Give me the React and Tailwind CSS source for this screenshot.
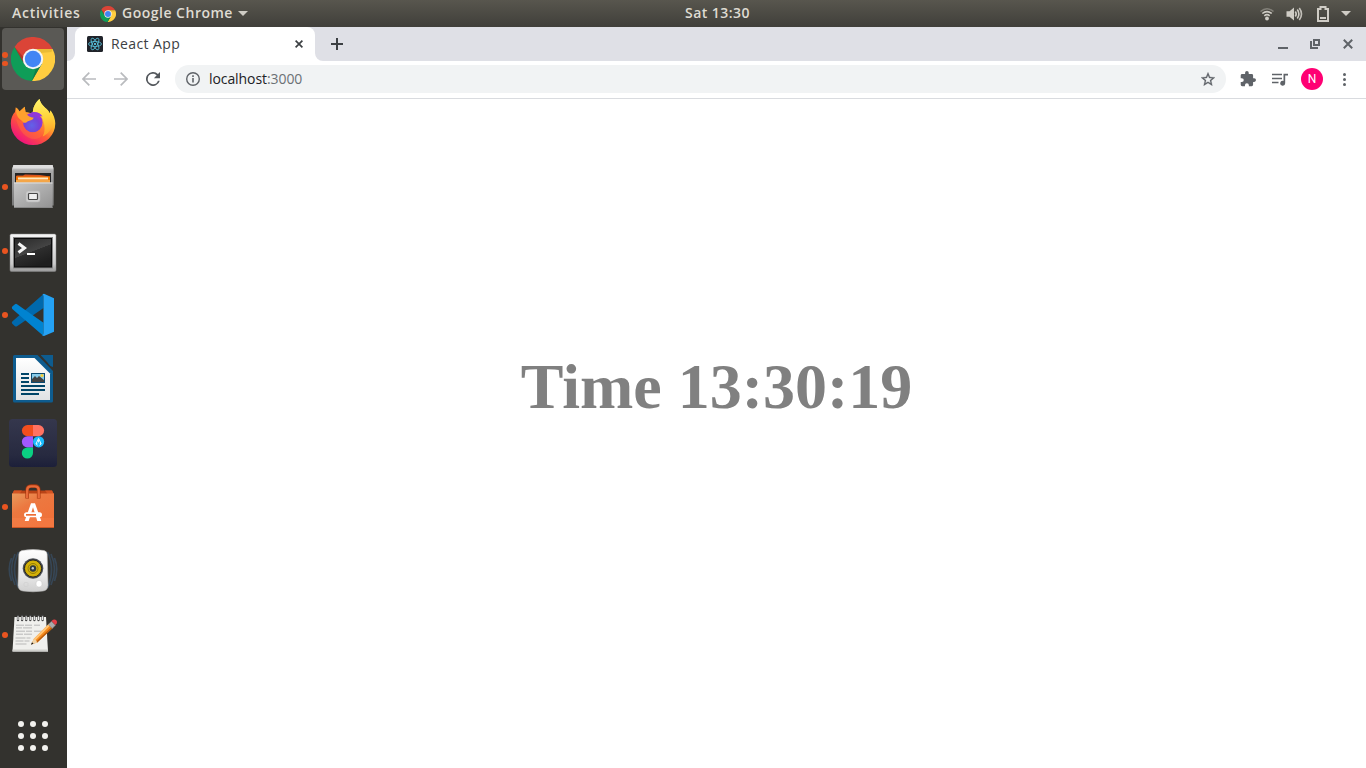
import React from "react";

function ChromeLogo({ className }) {
  return (
    <svg className={className} viewBox="-22 -22 44 44">
      <path d="M-18.46-12A22 22 0 0 1 19.6-10H0L-8.66 5Z" fill="#db4437" />
      <path d="M19.6-10A22 22 0 0 1-1.14 22L8.66 5 0-10Z" fill="#ffcd40" />
      <path d="M-1.14 22A22 22 0 0 1-18.46-12L-8.66 5H8.66Z" fill="#0f9d58" />
      <path d="M0-10H19.6L18.5-7 8-6Z" fill="#c49a20" opacity=".35" />
      <path d="M-18.46-12-8.66 5-9.5-2Z" fill="#7a1d14" opacity=".4" />
      <path d="M-1.14 22 8.66 5 3 9Z" fill="#064d2b" opacity=".35" />
      <circle r="10.2" fill="#f4f4f4" />
      <circle r="8.2" fill="#4285f4" />
    </svg>
  );
}

function Firefox() {
  return (
    <svg className="h-16 w-[67px]" viewBox="0 0 67 64">
      <defs>
        <linearGradient id="ffBody" x1=".85" y1=".1" x2=".25" y2=".95">
          <stop offset="0" stopColor="#fff44f" />
          <stop offset=".35" stopColor="#ffb52a" />
          <stop offset=".62" stopColor="#ff5a36" />
          <stop offset="1" stopColor="#f0127e" />
        </linearGradient>
        <linearGradient id="ffFlame" x1=".5" y1="0" x2=".6" y2="1">
          <stop offset="0" stopColor="#fff36b" />
          <stop offset=".5" stopColor="#ffd43a" />
          <stop offset="1" stopColor="#ff9a2a" />
        </linearGradient>
        <radialGradient id="ffGlobe" cx=".45" cy=".65" r=".65">
          <stop offset="0" stopColor="#6262e8" />
          <stop offset=".6" stopColor="#7542d8" />
          <stop offset="1" stopColor="#a52fd8" />
        </radialGradient>
      </defs>
      <path d="M39.5 8c1 5 5 8 8 11 1 1 1.500 2 2 3.500l1-3c3 4 4.800 8.600 4.800 13A22.200 21.500 0 0 1 10.800 32.500c0-5.200 1.800-9 4.200-11.500l.8-4.500c1.700 1 3 2.500 3.700 4l5.200-4.700.8 5.200c3 .2 5 .8 7.500 2.500C32 17 36 11 39.500 8Z" fill="url(#ffBody)" />
      <path d="M39.500 8c1 5 5 8 8 11 1 1 1.500 2 2 3.500l1-3c6 9 2 22-8 26 4-6 2-16-2-21-3-2-5-2-7.500-1C32 17 36 11 39.500 8Z" fill="url(#ffFlame)" />
      <circle cx="32.800" cy="31.500" r="9.800" fill="url(#ffGlobe)" />
      <path d="M31 21.500c5-1.500 10 .5 11.500 4-4-1.500-7 0-9-1Z" fill="#9138d8" />
      <path d="M15.800 16.500c1.700 1 3 2.500 3.700 4l5.200-4.700.8 5.200c1.500 4 5 5.500 8 5.500 0 3-4.500 2.500-6.500 4.500-2 1.500-4 1-5-1-2-2-6-3-6.200-13.500Z" fill="#ffa02d" />
      <path d="M16 28c2 1 4 2 6.500 2 .5 7 5 12 12 11 5-1 8-4 8.500-9 3 7 0 16-8 16-9.500 0-16-8-19-20Z" fill="#ff7139" opacity=".45" />
    </svg>
  );
}

function Files() {
  return (
    <svg className="h-16 w-[67px]" viewBox="0 0 67 64">
      <defs>
        <linearGradient id="fileBack" x2="0" y2="1"><stop stopColor="#ddd" /><stop offset=".15" stopColor="#aaa" /><stop offset="1" stopColor="#777" /></linearGradient>
        <linearGradient id="fileFront" x2="1" y2="1"><stop stopColor="#c7c7c7" /><stop offset="1" stopColor="#929292" /></linearGradient>
      </defs>
      <path d="M13.500 10h39l1.200 4v36.500H12V14Z" fill="url(#fileBack)" />
      <path d="M13.500 10h39l1 3.500h-41Z" fill="#dedede" />
      <path d="M15 18h36v11H15Z" fill="#252525" />
      <path d="M17 20.500h6l2-1 15 .5 10 1.500V29H16v-8Z" fill="#d9531e" />
      <path d="M16.500 21.500h33.500V29H16Z" fill="#f57900" />
      <path d="M18 22.500h30v2H18Z" fill="#ffe8c0" />
      <path d="M16 25h34v4H16Z" fill="#f4a648" />
      <path d="M14 27.500h38.500V53H14Z" fill="url(#fileFront)" />
      <path d="M14 27.500h38.500v1H14Z" fill="#e0e0e0" />
      <path d="M14 52h38.500v1H14Z" fill="#888" />
      <rect x="26" y="36" width="14" height="11" rx="2.500" fill="#cecece" stroke="#bababa" strokeWidth=".6" />
      <rect x="28.500" y="38.500" width="9" height="6" rx=".8" fill="#eee" stroke="#484848" strokeWidth="1.200" />
    </svg>
  );
}

function Terminal() {
  return (
    <svg className="h-16 w-[67px]" viewBox="0 0 67 64">
      <defs>
        <linearGradient id="termFrame" x2="0" y2="1"><stop stopColor="#f5f5f5" /><stop offset=".8" stopColor="#cacaca" /><stop offset="1" stopColor="#999" /></linearGradient>
        <linearGradient id="termScreen" x2=".5" y2="1"><stop stopColor="#292929" /><stop offset=".55" stopColor="#444" /><stop offset=".56" stopColor="#2e2e2e" /><stop offset="1" stopColor="#1e1e1e" /></linearGradient>
      </defs>
      <rect x="10" y="15" width="46" height="37.500" rx="1.500" fill="url(#termFrame)" stroke="#888" strokeWidth=".5" />
      <rect x="13" y="18" width="40" height="31.500" fill="#858585" />
      <rect x="14.500" y="19.500" width="37" height="28.500" fill="url(#termScreen)" stroke="#0b0b0b" />
      <path d="m18.500 24.500 6 4.500-6 4.500" fill="none" stroke="#f5f5f5" strokeWidth="3" />
      <path d="M27 34h8v2h-8Z" fill="#fff" />
    </svg>
  );
}

function Code() {
  return (
    <svg className="h-16 w-[67px]" viewBox="0 0 67 64">
      <path d="M43.500 11v14L17 43.200q-1 .7-2 0l-2.700-2.400q-1-1.100 0-2.200Z" fill="#0069ad" />
      <path d="M15 21.200q1-.8 2 0l26.500 18.600V53L12.300 26q-1-1.100 0-2.400Z" fill="#0083d0" />
      <path d="m42.500 11.200 1.500-.5 10 4.600v33.400L44 53l-2-.8q1.500-.2 1.500-2V13.500q0-1.600-1-2.300Z" fill="#25a2f4" />
    </svg>
  );
}

function Writer() {
  return (
    <svg className="h-16 w-[67px]" viewBox="0 0 67 64">
      <defs><linearGradient id="writerPaper" x2="0" y2="1"><stop stopColor="#fff" /><stop offset="1" stopColor="#e0e2e4" /></linearGradient></defs>
      <path d="M14.500 8h23L53 24v30a1.500 1.500 0 0 1-1.500 1.500h-37A1.500 1.500 0 0 1 13 54V9.500A1.500 1.500 0 0 1 14.500 8Z" fill="#0e5c8f" />
      <path d="M41 8h12v12q-3-.5-5.500-4.500L41 8.500Z" fill="#0e5c8f" />
      <path d="M16 11h18.500L50 26.500V53H16Z" fill="url(#writerPaper)" />
      <path d="M21 27h8M21 31h8M21 35h8M21 39h24M21 43h24M21 47h18" stroke="#004568" strokeWidth="2" />
      <path d="M31 26h14v10H31Z" fill="#0b4a70" />
      <path d="M32 27h12v8H32Z" fill="#88cbe9" />
      <circle cx="42" cy="28.500" r="1.600" fill="#f5cf36" />
      <path d="m32 35v-3l3-3 2 2 2-2 5 4v2Z" fill="#424242" />
    </svg>
  );
}

function Figma() {
  return (
    <svg className="h-16 w-[67px]" viewBox="0 0 67 64">
      <defs><linearGradient id="figmaTile" x2="0" y2="1"><stop stopColor="#35374d" /><stop offset=".75" stopColor="#272a40" /><stop offset="1" stopColor="#1c1f39" /></linearGradient></defs>
      <rect x="9" y="8" width="48" height="48" rx="3.500" fill="url(#figmaTile)" />
      <path d="M33 14h-5.500a5.500 5.500 0 0 0 0 11.200H33Z" fill="#f24e1e" />
      <path d="M33 14h5.500a5.500 5.500 0 0 1 0 11.200H33Z" fill="#ff7262" />
      <path d="M33 25.200h-5.500a5.500 5.500 0 0 0 0 11.200H33Z" fill="#a259ff" />
      <path d="M33 36.400v5.600a5.600 5.600 0 1 1-5.500-5.600Z" fill="#0acf83" />
      <circle cx="38.600" cy="30.800" r="5.600" fill="#1abcfe" />
      <path d="m38.600 27.400-2.500 5.300 1.500 1.800m1-7.100 2.500 5.300-1.500 1.800m-3.500-1.800h1.300m2.400 0h1.300M38.600 28.500v3" fill="none" stroke="#e8faff" strokeWidth="1" />
    </svg>
  );
}

function Software() {
  return (
    <svg className="h-16 w-[67px]" viewBox="0 0 67 64">
      <defs><linearGradient id="bagBody" x2=".7" y2="1"><stop stopColor="#e99a5c" /><stop offset=".4" stopColor="#ec7840" /><stop offset="1" stopColor="#f07038" /></linearGradient></defs>
      <path d="m14 15.500-2 4h42l-2-4Z" fill="#b94316" />
      <path d="m14 15.500-2 4h7l3-4Zm31 0 3 4h6l-2-4Z" fill="#d35423" />
      <path d="M12 18.500h42V53H12Z" fill="url(#bagBody)" />
      <path d="M12 43h42v10H12Z" fill="#ff8b58" opacity=".25" />
      <path d="M12 52.300h42V53H12Z" fill="#bd4a1d" />
      <path d="M27.200 23.500v-8.500q0-4 4-4h3.500q4 0 4 4v8.500" fill="none" stroke="#a5360c" strokeWidth="3.600" />
      <path d="M27.200 23v-7.800q0-3.800 4-3.800h3.500q4 0 4 3.800V23" fill="none" stroke="#e86a39" strokeWidth="2.400" />
      <path d="M31 28.300h4l6.300 17.700h-4L33 32.200 28.700 46h-4Z" fill="#fff" />
      <rect x="24" y="37.300" width="18" height="5" rx="2.500" fill="#fff" />
      <path d="M26 39h10v1.700H26Z" fill="#ed6e35" />
    </svg>
  );
}

function Rhythmbox() {
  return (
    <svg className="h-16 w-[67px]" viewBox="0 0 67 64">
      <defs>
        <linearGradient id="speakerCase" x2="0" y2="1"><stop stopColor="#fff" /><stop offset=".65" stopColor="#e6e6e6" /><stop offset="1" stopColor="#cfcfcf" /></linearGradient>
        <radialGradient id="speakerCone"><stop stopColor="#806b00" /><stop offset=".55" stopColor="#e0bd10" /><stop offset="1" stopColor="#c4a200" /></radialGradient>
      </defs>
      <path d="M18.500 13q-8 17 0 36M15 15q-7 15 0 31M11.500 19q-4.500 11 0 23M47.500 13q8 17 0 36M51 15q7 15 0 31M54.500 19q4.500 11 0 23" fill="none" stroke="#3d6590" strokeWidth="1.700" opacity=".4" />
      <path d="M22 11.500Q33 9.500 44 11.500q3 .7 3.200 4l.8 31q-.5 5-5 5.500-10 1.500-20 0-4.500-.5-5-5.500l.8-31q.2-3.300 3.200-4Z" fill="url(#speakerCase)" stroke="#b8b8b8" strokeWidth=".6" />
      <circle cx="33" cy="29.500" r="10.300" fill="#4c5055" />
      <circle cx="33" cy="29.500" r="8.600" fill="url(#speakerCone)" stroke="#242424" strokeWidth="1" />
      <circle cx="33" cy="29.500" r="5" fill="none" stroke="#7c6700" strokeWidth=".8" />
      <circle cx="33" cy="29.500" r="3.200" fill="#303a40" />
      <circle cx="32.800" cy="29.300" r="1.200" fill="#c5ccd0" />
      <rect x="36" y="41.500" width="6" height="6.500" rx="2.500" fill="#fff" stroke="#d0d0d0" strokeWidth=".7" />
      <rect x="24" y="43.500" width="4" height="4" rx="1" fill="none" stroke="#d0d0d0" strokeWidth=".7" />
    </svg>
  );
}

function Notes() {
  return (
    <svg className="h-16 w-[67px]" viewBox="0 0 67 64">
      <path d="M14.500 14h31.500l2 34.500H12.500Z" fill="#f0f0ed" />
      <path d="M12.600 46.500h35.300l.1 2H12.500Z" fill="#cfcfcb" />
      <path d="M16 22.200h8m1 0h7m2 0h6M16 24.900h6m1 0h9M16 28.200h9m1 0h6m2 0h8M16 31.200h7m1 0h8M15.500 35h10m1 0h4M15.500 38h8m1 0h5M15.500 41h11" stroke="#aaa" strokeWidth=".8" />
      <path d="M18 17.200v-4.200m4.100 4.200v-4.200m4.100 4.200v-4.200m4.100 4.200v-4.200m4.100 4.200v-4.200m4.100 4.200v-4.200m4.100 4.200v-4.200" stroke="#484848" strokeWidth="2.300" strokeLinecap="round" />
      <path d="M18 17v-3.700m4.100 3.700v-3.700m4.100 3.700v-3.700m4.100 3.700v-3.700m4.100 3.700v-3.700m4.100 3.700v-3.700m4.100 3.700v-3.700" stroke="#eee" strokeWidth="1.100" />
      <path d="m31.200 41.500 2.500-5.500 15.500-15.500 4 4L37.300 39.500Z" fill="#f58a1c" />
      <path d="m33.700 36 15.500-15.500 1.500 1.500-15.500 15.500Z" fill="#ffc578" />
      <path d="m37.300 39.500 15.900-15-1-1-15.900 15Z" fill="#b85b0c" />
      <path d="m31.200 41.500 2.500-5.500q2.700.8 3.600 3.500Z" fill="#f0d5aa" />
      <path d="m31 41.700 1-2.400 1.500 1.400Z" fill="#171717" />
      <path d="m48.300 21.500 3.200-3.300 4 4-3.200 3.300Z" fill="#aaa" stroke="#777" strokeWidth=".5" />
      <path d="m51.500 18 1.500-1.200q2-.8 3.300.4t.5 3.300L55.300 22Z" fill="#e33e46" />
    </svg>
  );
}

function DockItem({ dots = 0, active = false, children }) {
  return (
    <div className="relative flex h-16 w-[67px] shrink-0 items-center">
      {active && <span className="absolute left-[2px] top-px h-[62px] w-[62px] rounded-[4px] bg-[#5a5955]" />}
      <span className="relative flex">{children}</span>
      <span className="absolute left-[2px] top-0 flex h-16 flex-col items-center justify-center gap-[3px]">
        {dots > 0 && <span className="h-[5.500px] w-[5.500px] rounded-full bg-[#e95420]" />}
        {dots > 1 && <span className="h-[5.500px] w-[5.500px] rounded-full bg-[#e95420]" />}
      </span>
    </div>
  );
}

function Dock() {
  return (
    <aside className="flex w-[67px] shrink-0 flex-col bg-[#33322e]">
      <DockItem active dots={2}><ChromeLogo className="ml-[11px] h-[44px] w-[44px]" /></DockItem>
      <DockItem><Firefox /></DockItem>
      <DockItem dots={1}><Files /></DockItem>
      <DockItem dots={1}><Terminal /></DockItem>
      <DockItem dots={1}><Code /></DockItem>
      <DockItem><Writer /></DockItem>
      <DockItem><Figma /></DockItem>
      <DockItem dots={1}><Software /></DockItem>
      <DockItem><Rhythmbox /></DockItem>
      <DockItem dots={1}><Notes /></DockItem>
      <div className="mt-auto grid grid-cols-[6px_6px_6px] gap-[6px] pb-[17px] pl-[18px]">
        {Array.from({ length: 9 }, (_, i) => <span key={i} className="h-[6px] w-[6px] rounded-full bg-[#f2f1ee]" />)}
      </div>
    </aside>
  );
}

function SystemBar() {
  return (
    <header className="flex h-[27px] shrink-0 items-center bg-linear-to-b from-[#58564e] to-[#403f3a] font-['Open_Sans',sans-serif] text-[14px] font-semibold leading-[25px] text-[#dfdbd2]">
      <div className="flex flex-1 items-center pl-3">
        <span className="w-[88px] pb-[2px] tracking-[0.720px]">Activities</span>
        <ChromeLogo className="h-4 w-4" />
        <span className="ml-[6px] w-[116px] whitespace-nowrap pb-[2px] tracking-[0.500px]">Google Chrome</span>
        <svg className="h-[5px] w-[10px]" viewBox="0 0 10 5"><path d="M0 0h10L5 5Z" fill="#cfccc5" /></svg>
      </div>
      <span className="w-[65px] whitespace-nowrap pb-[2px] tracking-[0.450px]">Sat 13:30</span>
      <div className="flex w-[616px] items-center justify-end pr-[15px] text-[#cfccc5]">
        <svg className="h-[14px] w-[14px]" viewBox="0 0 14 14" fill="none" stroke="currentColor" strokeWidth="1.600">
          <path d="M.5 4.500Q7-1 13.500 4.500" opacity=".4" /><path d="M2.300 6.500Q7 2.700 11.700 6.500M4.300 8.800Q7 6.600 9.700 8.800" /><circle cx="7" cy="11.500" r="1.900" fill="currentColor" stroke="none" />
        </svg>
        <svg className="ml-[12px] h-[14px] w-[17px]" viewBox="0 0 17 14" fill="none" stroke="currentColor" strokeWidth="1.600">
          <path d="M.5 4.200h3L8 .5v13L3.500 9.800h-3Z" fill="currentColor" stroke="none" /><path d="M9.300 4.500q1.800 2.500 0 5M11.300 2.500q3.200 4.500 0 9" /><path d="M13.300 1q4.400 6 0 12" opacity=".9" />
        </svg>
        <svg className="ml-[14px] h-[16px] w-[12px]" viewBox="0 0 12 16"><path d="M1 3h2.500V1h5v2H11v12H1Z" fill="none" stroke="currentColor" strokeWidth="2" /><path d="M3 11h6v2H3Z" fill="currentColor" /></svg>
        <svg className="ml-[12px] h-[5px] w-[10px]" viewBox="0 0 10 5"><path d="M0 0h10L5 5Z" fill="currentColor" /></svg>
      </div>
    </header>
  );
}

function TabStrip() {
  return (
    <div className="flex h-[34px] shrink-0 items-stretch bg-[#dfe0e6]">
      <div className="w-2 bg-white"><div className="h-full rounded-br-lg bg-[#dfe0e6]" /></div>
      <div className="flex w-[240px] items-center rounded-t-lg bg-white pl-3 pr-[12px]">
        <svg className="h-4 w-4" viewBox="0 0 16 16" fill="none" stroke="#56bdd8" strokeWidth=".85">
          <rect width="16" height="16" rx="1.500" fill="#20232a" stroke="none" />
          <ellipse cx="8" cy="8" rx="6.500" ry="2.500" /><ellipse cx="8" cy="8" rx="6.500" ry="2.500" transform="rotate(60 8 8)" /><ellipse cx="8" cy="8" rx="6.500" ry="2.500" transform="rotate(120 8 8)" /><circle cx="8" cy="8" r="1.100" fill="#61dafb" stroke="none" />
        </svg>
        <span className="ml-2 pb-[2px] text-[14px] tracking-[0.400px] text-[#3c4043]">React App</span>
        <svg className="ml-auto h-[8px] w-[8px]" viewBox="0 0 8 8"><path d="m.6.6 6.800 6.800m0-6.800L.6 7.400" stroke="#3c4043" strokeWidth="1.700" /></svg>
      </div>
      <div className="w-2 bg-white"><div className="h-full rounded-bl-lg bg-[#dfe0e6]" /></div>
      <svg className="ml-2 mt-[11px] h-3 w-3" viewBox="0 0 12 12"><path d="M0 6h12M6 0v12" stroke="#3c4043" strokeWidth="2" /></svg>
      <div className="ml-auto flex items-center pr-[13px]">
        <svg className="h-[10px] w-[10px]" viewBox="0 0 10 10"><path d="M0 9h10" stroke="#5f6368" strokeWidth="2" /></svg>
        <svg className="ml-[22px] h-[10px] w-[10px]" viewBox="0 0 10 10" fill="none" stroke="#5f6368" strokeWidth="2"><path d="M4 1h5v5H4ZM1 2v7h7" /></svg>
        <svg className="ml-[23px] h-[10px] w-[10px]" viewBox="0 0 10 10"><path d="m.8.8 8.400 8.400m0-8.400L.8 9.200" stroke="#5f6368" strokeWidth="2" /></svg>
      </div>
    </div>
  );
}

function Toolbar() {
  return (
    <div className="flex h-[38px] shrink-0 items-center border-b border-[#d9dbdf] bg-white pb-px pl-[15px] pr-[20px]">
      <svg className="h-[14px] w-[14px]" viewBox="0 0 14 14" fill="none" stroke="#b9bbbe" strokeWidth="1.700"><path d="M14 7H1M7.300.7 1 7l6.300 6.300" /></svg>
      <svg className="ml-[18px] h-[14px] w-[14px]" viewBox="0 0 14 14" fill="none" stroke="#b9bbbe" strokeWidth="1.700"><path d="M0 7h13M6.700.7 13 7l-6.300 6.300" /></svg>
      <svg className="ml-[18px] h-[14px] w-[14px]" viewBox="4 4 16 16"><path d="M17.650 6.350A8 8 0 1 0 19.730 14h-2.080A6 6 0 1 1 12 6c1.660 0 3.140.690 4.220 1.780L13 11h7V4Z" fill="#54585d" /></svg>
      <div className="ml-[15px] flex h-7 w-[1051px] items-center rounded-full bg-[#f1f3f4] pl-[11px] pr-[11px]">
        <svg className="h-[14px] w-[14px]" viewBox="0 0 14 14"><circle cx="7" cy="7" r="6.300" fill="none" stroke="#5f6368" strokeWidth="1.400" /><path d="M6.200 6h1.600v4.500H6.200ZM6.200 3.300h1.600v1.600H6.200Z" fill="#5f6368" /></svg>
        <span className="ml-[9px] pb-px text-[14px] tracking-[-0.080px] text-[#202124]">localhost<span className="text-[#6b7075]">:3000</span></span>
        <svg className="ml-auto h-[14px] w-[14px]" viewBox="2 2 20 19"><path d="m22 9.240-7.190-.620L12 2 9.190 8.630 2 9.240l5.460 4.730L5.820 21 12 17.270 18.180 21l-1.630-7.030ZM12 15.400l-3.760 2.270 1-4.280-3.320-2.880 4.380-.380L12 6.100l1.710 4.040 4.380.380-3.320 2.880 1 4.280Z" fill="#5f6368" stroke="#5f6368" strokeWidth=".4" /></svg>
      </div>
      <svg className="ml-[14px] h-[16px] w-[16px]" viewBox="1 1 22 22"><path d="M20.500 11H19V7a2 2 0 0 0-2-2h-4V3.500a2.500 2.500 0 0 0-5 0V5H4a2 2 0 0 0-2 2v3.800h1.500a2.700 2.700 0 0 1 0 5.400H2V20a2 2 0 0 0 2 2h3.800v-1.500a2.700 2.700 0 0 1 5.400 0V22H17a2 2 0 0 0 2-2v-4h1.500a2.500 2.500 0 0 0 0-5Z" fill="#5f6368" /></svg>
      <svg className="ml-[16px] h-[13px] w-[16px]" viewBox="0 0 16 13"><path d="M0 1.500h10M0 5.500h10M0 9.500h6.500" stroke="#5f6368" strokeWidth="1.600" /><path d="M11.500.700H16v1.700h-2.800v7.800a2.500 2.500 0 1 1-1.700-2.300Z" fill="#5f6368" /></svg>
      <span className="ml-[13px] flex h-[22px] w-[22px] items-center justify-center rounded-full bg-[#ff0073] font-['Roboto',sans-serif] text-[12px] text-white">N</span>
      <span className="ml-auto flex flex-col gap-[2px]"><i className="h-[3px] w-[3px] rounded-full bg-[#5f6368]" /><i className="h-[3px] w-[3px] rounded-full bg-[#5f6368]" /><i className="h-[3px] w-[3px] rounded-full bg-[#5f6368]" /></span>
    </div>
  );
}

export default function App() {
  return (
    <div className="flex h-[768px] w-[1366px] flex-col overflow-hidden bg-white">
      <SystemBar />
      <div className="flex min-h-0 flex-1">
        <Dock />
        <section className="flex min-w-0 flex-1 flex-col font-['Open_Sans',sans-serif]">
          <TabStrip />
          <Toolbar />
          <main className="flex flex-1 justify-center bg-white pt-[251px]">
            <h1 className="font-['Liberation_Serif',serif] text-[64px] font-bold leading-[74px] text-[#808080]">Time 13:30:19</h1>
          </main>
        </section>
      </div>
    </div>
  );
}
